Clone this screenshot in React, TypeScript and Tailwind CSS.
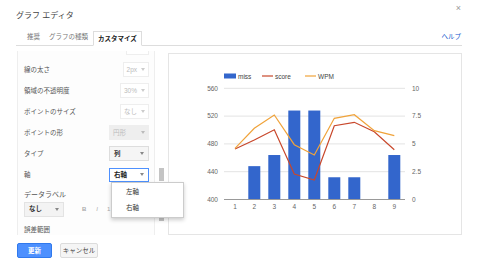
const FONT = "font-['Liberation_Sans','Noto_Sans_CJK_JP',sans-serif]";

const xs = [235, 254.3, 274.3, 294.3, 314.3, 334.3, 354.3, 374.3, 394.3];
const miss = [0, 3, 4, 8, 8, 2, 2, 0, 4];
const score = [150, 141, 130.7, 175, 181, 126.7, 123.3, 132.7, 150.7];
const wpm = [149.3, 129.3, 116, 145.7, 156, 119.3, 115.7, 131.7, 136.7];

const BASE = 200.5;
const STEP = 27.8;

function Arrow({ color = "border-t-[#aaa]" }: { color?: string }) {
    return <span className={`w-0 h-0 border-x-[2px] border-x-transparent border-t-[3px] ${color}`} />;
}

function Row({ label, children }: { label: string; children: React.ReactNode }) {
    return (
        <div className="flex items-center justify-between h-[21px]">
            <span className="text-[6.5px] text-[#555]">{label}</span>
            {children}
        </div>
    );
}

function FaintSelect({ value }: { value: string }) {
    return (
        <div className="flex items-center gap-[4px] h-[15px] px-[3px] border border-[#eee] bg-white text-[6.5px] text-[#bbb]">
            <span>{value}</span>
            <Arrow color="border-t-[#ccc]" />
        </div>
    );
}

function Chart() {
    const pts = (arr: number[]) => arr.map((y, i) => `${xs[i]},${y}`).join(" ");
    const leftLabels = ["400", "440", "480", "520", "560"];
    const rightLabels = ["0", "2.5", "5", "7.5", "10"];
    return (
        <svg width="292" height="180" viewBox="169 55 292 180" className="block">
            <rect x="224" y="74.5" width="12" height="5" fill="#3366cc" />
            <text x="238" y="79.5" fontSize="6.5" fill="#444">miss</text>
            <line x1="262" y1="77" x2="273" y2="77" stroke="#c8472b" strokeWidth="1.2" />
            <text x="275" y="79.5" fontSize="6.5" fill="#444">score</text>
            <line x1="305" y1="77" x2="316" y2="77" stroke="#f0a33a" strokeWidth="1.2" />
            <text x="318" y="79.5" fontSize="6.5" fill="#444">WPM</text>
            {leftLabels.map((l, k) => {
                const y = BASE - k * STEP;
                return (
                    <g key={l}>
                        {k > 0 && <line x1="224" y1={y} x2="405" y2={y} stroke="#e3e3e3" strokeWidth="1" />}
                        <text x="218" y={y + 2.3} fontSize="6.5" fill="#666" textAnchor="end">{l}</text>
                        <text x="412" y={y + 2.3} fontSize="6.5" fill="#666">{rightLabels[k]}</text>
                    </g>
                );
            })}
            {miss.map((v, i) =>
                v > 0 ? (
                    <rect key={i} x={xs[i] - 6} y={BASE - (v * STEP) / 2.5} width="12" height={(v * STEP) / 2.5} fill="#3366cc" />
                ) : null
            )}
            <line x1="224" y1={BASE} x2="405" y2={BASE} stroke="#999" strokeWidth="1" />
            <polyline points={pts(score)} fill="none" stroke="#c8472b" strokeWidth="1.2" />
            <polyline points={pts(wpm)} fill="none" stroke="#f0a33a" strokeWidth="1.2" />
            {xs.map((x, i) => (
                <text key={i} x={x} y="210" fontSize="6.5" fill="#666" textAnchor="middle">{i + 1}</text>
            ))}
        </svg>
    );
}

export default function App() {
    return (
        <div className={`relative w-[480px] h-[266px] bg-white overflow-hidden ${FONT}`}>
            <span className="absolute top-[2px] right-[19px] text-[9px] text-[#999]">×</span>
            <h1 className="pl-[16px] pt-[10px] h-[32px] text-[8px] text-[#444]">グラフ エディタ</h1>

            <div className="mx-[16px] w-[446px] h-[14px] flex items-end border-b border-[#ddd] text-[6.5px]">
                <span className="ml-[11px] mb-[3px] text-[#777]">推奨</span>
                <span className="ml-[9px] mb-[3px] text-[#777]">グラフの種類</span>
                <div className="ml-[5px] -mb-[1px] h-[15px] px-[4px] flex items-center border border-[#ddd] border-b-white bg-white font-bold text-[#222]">
                    カスタマイズ
                </div>
                <span className="ml-auto mr-[1px] mb-[3px] text-[#15c]">ヘルプ</span>
            </div>

            <div className="flex mt-[5px]">
                <div className="relative ml-[17px] w-[138px] h-[184px] border-x border-[#eee] bg-[#fdfdfd] pl-[6px] pr-[5px]">
                    <div className="flex justify-end">
                        <div className="w-[23px] h-[4px] border border-t-0 border-[#eee] bg-white" />
                    </div>
                    <div className="mt-[4px]">
                        <Row label="線の太さ"><FaintSelect value="2px" /></Row>
                        <Row label="領域の不透明度"><FaintSelect value="30%" /></Row>
                        <Row label="ポイントのサイズ"><FaintSelect value="なし" /></Row>
                        <Row label="ポイントの形">
                            <div className="flex items-center justify-between w-[40px] h-[15px] px-[4px] bg-[#eee] text-[6.5px] text-[#bbb]">
                                <span>円形</span>
                                <Arrow color="border-t-[#bbb]" />
                            </div>
                        </Row>
                        <Row label="タイプ">
                            <div className="flex items-center justify-between w-[40px] h-[15px] px-[4px] bg-[#f5f5f5] border border-[#ddd] text-[6.5px] font-bold text-[#333]">
                                <span>列</span>
                                <Arrow color="border-t-[#888]" />
                            </div>
                        </Row>
                        <Row label="軸">
                            <div className="flex items-center justify-between w-[40px] h-[14px] px-[4px] bg-white border border-[#4d90fe] text-[6.5px] font-bold text-[#222]">
                                <span>右軸</span>
                                <Arrow color="border-t-[#888]" />
                            </div>
                        </Row>
                    </div>
                    <div className="mt-[5px] text-[7px] text-[#555]">データラベル</div>
                    <div className="flex items-center mt-[1px] h-[15px] text-[6px] text-[#aaa]">
                        <div className="flex items-center justify-between w-[40px] h-[15px] px-[4px] bg-[#f3f3f3] border border-[#e3e3e3] text-[6.5px] font-bold text-[#333]">
                            <span>なし</span>
                            <Arrow color="border-t-[#888]" />
                        </div>
                        <span className="ml-[18px] font-bold">B</span>
                        <span className="ml-[10px] italic">I</span>
                        <span className="ml-[9px]">1</span>
                    </div>
                    <div className="mt-[8px] text-[6.5px] text-[#555]">誤差範囲</div>

                    <div className="absolute top-[131px] left-[93px] w-[73px] h-[36px] bg-white border border-[#ccc] shadow-[0_2px_4px_rgba(0,0,0,0.2)] z-10 flex flex-col justify-center gap-[6px] pl-[14px] text-[6.5px] text-[#333]">
                        <span>左軸</span>
                        <span>右軸</span>
                    </div>
                </div>

                <div className="w-[13px] flex flex-col items-center">
                    <div className="mt-[117px] w-[5px] h-[13px] bg-[#c4c4c4]" />
                    <div className="mt-[36px] w-[5px] h-[4px] bg-[#c4c4c4]" />
                </div>

                <div className="mt-[2px] w-[294px] h-[182px] border border-[#e5e5e5] bg-white">
                    <Chart />
                </div>
            </div>

            <div className="flex gap-[8px] ml-[17px] mt-[8px]">
                <button className="w-[35px] h-[15px] bg-[#4d90fe] border border-[#3079ed] text-white text-[6.5px] font-bold rounded-[2px]">更新</button>
                <button className="w-[38px] h-[15px] bg-[#f5f5f5] border border-[#dcdcdc] text-[#444] text-[6.5px] whitespace-nowrap rounded-[2px]">キャンセル</button>
            </div>
        </div>
    );
}
